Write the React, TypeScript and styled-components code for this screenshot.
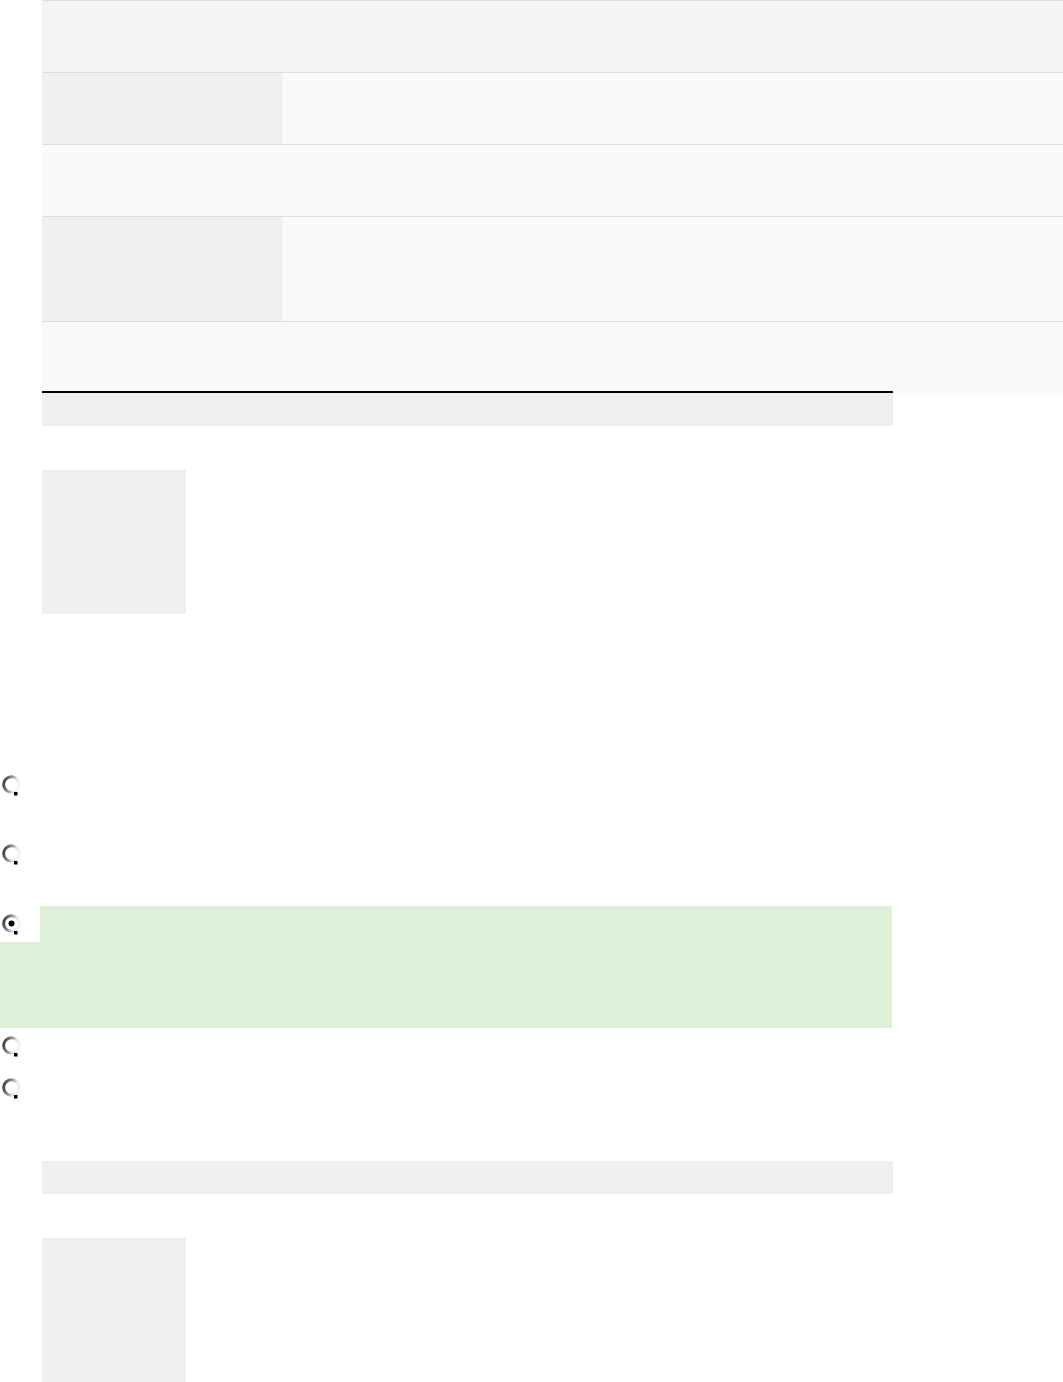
import React from 'react'
import styled, { createGlobalStyle } from 'styled-components'

const GlobalStyle = createGlobalStyle`
  html, body {
    margin: 0;
    padding: 0;
    background: #ffffff;
    font-family: "Liberation Sans", Arial, sans-serif;
  }
`

const Page = styled.div`
  width: 100%;
  overflow: hidden;
  padding-bottom: 40px;
`

const Column = styled.div`
  padding-left: 42px;
`

const Table = styled.div`
  width: 1040px;
  border-top: 1px solid #dddddd;
`

const Row = styled.div<{ $height: number; $bg?: string; $last?: boolean }>`
  display: flex;
  height: ${p => p.$height}px;
  background: ${p => p.$bg || '#f9f9f9'};
  border-bottom: ${p => (p.$last ? 'none' : '1px solid #dddddd')};
`

const LabelCell = styled.div`
  width: 240px;
  flex: none;
  background: #f0f0f0;
`

const ValueCell = styled.div`
  flex: 1;
  background: #fafafa;
`

const Bar = styled.div<{ $ruled?: boolean }>`
  width: 851px;
  height: 33px;
  background: #eeeff1;
  ${p => p.$ruled && `
    margin-top: -2px;
    border-top: 2px solid #000000;
  `}
`

const Thumb = styled.div`
  width: 144px;
  height: 144px;
  margin-top: 44px;
  background: #efefef;
`

const OptionList = styled.div`
  margin-top: 153px;
  margin-bottom: 49px;
  width: 892px;
`

const Option = styled.div<{ $height: number; $selected?: boolean }>`
  height: ${p => p.$height}px;
  background: ${p => (p.$selected ? '#dff0d8' : 'transparent')};
`

const RadioBox = styled.div`
  float: left;
  width: 40px;
  height: 36px;
  padding-top: 7px;
  padding-left: 2px;
  box-sizing: border-box;
  background: #ffffff;
`

function Radio({ checked }: { checked?: boolean }) {
  return (
    <svg width="20" height="22" viewBox="0 0 20 22">
      <defs>
        <linearGradient id="ring" x1="0" y1="0.2" x2="1" y2="0.5">
          <stop offset="0" stopColor="#3c3c3c" />
          <stop offset="0.4" stopColor="#8a8a8a" />
          <stop offset="0.75" stopColor="#e6e6e6" />
          <stop offset="1" stopColor="#f4f4f4" />
        </linearGradient>
      </defs>
      <circle cx="9.5" cy="10.5" r="7.8" fill="#ffffff" stroke="url(#ring)" strokeWidth="3" />
      <rect x="12" y="18" width="3.5" height="3.5" fill="#000000" />
      {checked && <circle cx="9.5" cy="10.5" r="3" fill="#000000" />}
    </svg>
  )
}

const options = [
  { height: 69 },
  { height: 70 },
  { height: 122, selected: true },
  { height: 42 },
  { height: 42 },
]

export default function App() {
  return (
    <Page>
      <GlobalStyle />
      <Column>
        <Table>
          <Row $height={71} $bg="#f4f4f4" />
          <Row $height={71}>
            <LabelCell />
            <ValueCell />
          </Row>
          <Row $height={71} />
          <Row $height={104}>
            <LabelCell />
            <ValueCell />
          </Row>
          <Row $height={71} $last />
        </Table>
        <Bar $ruled />
        <Thumb />
      </Column>

      <OptionList>
        {options.map((o, i) => (
          <Option key={`option_${i}`} $height={o.height} $selected={o.selected}>
            <RadioBox>
              <Radio checked={o.selected} />
            </RadioBox>
          </Option>
        ))}
      </OptionList>

      <Column>
        <Bar />
        <Thumb />
      </Column>
    </Page>
  )
}
